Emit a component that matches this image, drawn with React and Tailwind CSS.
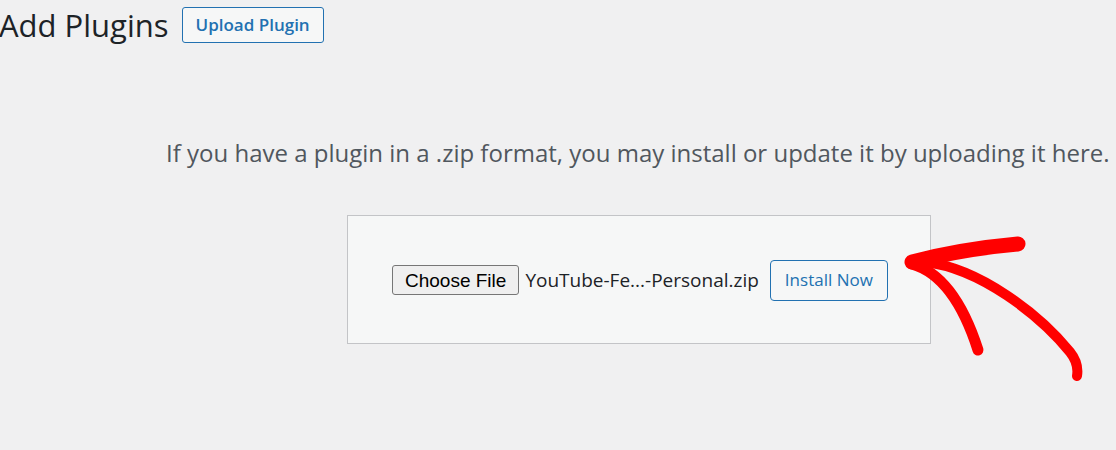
import React from 'react';

function RedArrow() {
  return (
    <svg className="absolute left-0 top-0 pointer-events-none" width="1116" height="450" viewBox="0 0 1116 450">
      <g fill="none" stroke="#ff0000" strokeLinecap="round" strokeLinejoin="round">
        <path d="M1018 244 C 985 247, 950 252, 912 262" strokeWidth="15" />
        <path d="M912 264 C 940 272, 962 300, 978 350" strokeWidth="11" />
        <path d="M925 262 C 980 268, 1040 315, 1070 352 C 1078 362, 1078 370, 1077 376" strokeWidth="10" />
      </g>
    </svg>
  );
}

export default function App() {
  return (
    <div className="relative w-[1116px] h-[450px] overflow-hidden bg-[#f0f0f1]" style={{ fontFamily: '"Open Sans", "Noto Sans", sans-serif' }}>
      <div className="flex items-center gap-[13px] pt-[7px] -ml-[1px]">
        <h1 className="text-[31px] leading-[36px] font-normal text-[#1d2327]">Add Plugins</h1>
        <button className="h-[36px] px-[13px] rounded-[3px] border border-[#2271b1] bg-[#f6f7f7] text-[#2271b1] text-[17px] font-semibold">
          Upload Plugin
        </button>
      </div>

      <p className="mt-[94px] ml-[166px] text-[24px] leading-[32px] text-[#50575e] whitespace-nowrap">
        If you have a plugin in a .zip format, you may install or update it by uploading it here.
      </p>

      <div className="mt-[46px] ml-[347px] w-[584px] h-[129px] border border-[#c3c4c7] bg-[#f6f7f7] flex items-center pl-[44px] pt-[1px]">
        <button className="h-[30px] px-[12px] rounded-[3px] border border-[#767676] bg-[#efefef] text-[#000] text-[19px] leading-none" style={{ fontFamily: '"Liberation Sans", Arial, sans-serif' }}>
          Choose File
        </button>
        <span className="ml-[6px] text-[19px] text-[#1d2327]">YouTube-Fe...-Personal.zip</span>
        <button className="ml-[11px] h-[41px] px-[14px] rounded-[4px] border border-[#2271b1] bg-[#f6f7f7] text-[#2271b1] text-[17px]">
          Install Now
        </button>
      </div>

      <RedArrow />
    </div>
  );
}
